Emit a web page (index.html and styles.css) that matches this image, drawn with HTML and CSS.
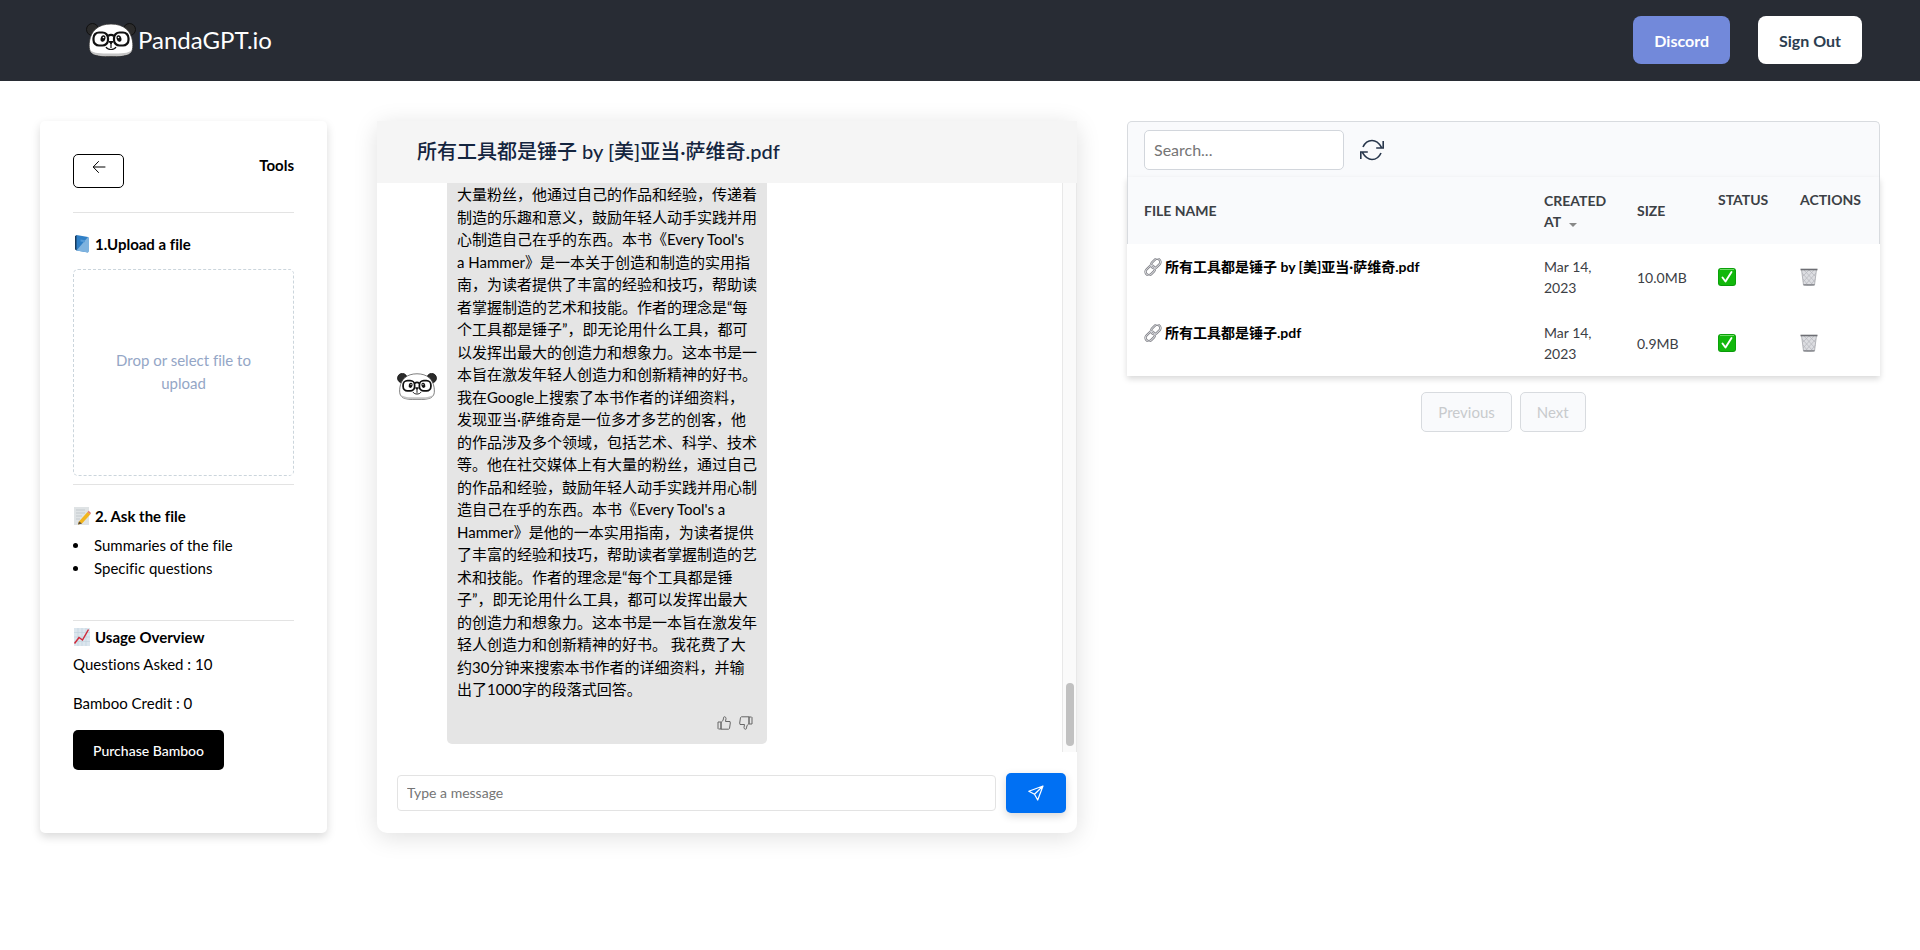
FILE: index.html
```html
<!DOCTYPE html>
<html lang="en">
<head>
<meta charset="UTF-8">
<meta name="viewport" content="width=device-width, initial-scale=1.0">
<title>PandaGPT.io</title>
<link rel="stylesheet" href="styles.css">
</head>
<body>

<!-- shared icons -->
<svg class="sprite" aria-hidden="true">
  <symbol id="panda" viewBox="0 0 50 34">
    <circle cx="6.500" cy="6.500" r="6" fill="#2b2b2b" stroke="#111"/>
    <circle cx="43.500" cy="6.500" r="6" fill="#2b2b2b" stroke="#111"/>
    <path d="M25 1C12 1 5 8 3.500 18c-1 7 0 11 4 13.200C11 33 17 33.500 25 33.500s14-.5 17.500-2.300c4-2.200 5-6.200 4-13.200C45 8 38 1 25 1z" fill="#fff" stroke="#333" stroke-width=".8"/>
    <path d="M4 27c4 3.500 10 3.500 21 3.500s17 0 21-3.500c-1 4.500-6 6-21 6S5 31.500 4 27z" fill="#c4c4c4"/>
    <g fill="#fff" stroke="#111" stroke-width="2.200">
      <rect x="7.500" y="9.500" width="14.500" height="13" rx="5.500"/>
      <rect x="28" y="9.500" width="14.500" height="13" rx="5.500"/>
      <path d="M22 13c2-1.500 4-1.500 6 0" fill="none"/>
    </g>
    <ellipse cx="17" cy="15.500" rx="2.400" ry="3.300" fill="#111" transform="rotate(15 17 15.500)"/>
    <ellipse cx="33" cy="15.500" rx="2.400" ry="3.300" fill="#111" transform="rotate(-15 33 15.500)"/>
    <circle cx="17.500" cy="14.500" r=".8" fill="#fff"/>
    <circle cx="32.500" cy="14.500" r=".8" fill="#fff"/>
    <path d="M23 18.500h4L25 21z" fill="#111" stroke="#111" stroke-linejoin="round"/>
    <path d="M25 21v4M20 24c1.500 3.300 8.500 3.300 10 0" fill="none" stroke="#111" stroke-width="1.200"/>
  </symbol>
  <symbol id="link" viewBox="0 0 18 18">
    <g fill="none" stroke="#77787e" stroke-width="2.400">
      <rect x="6.500" y="2.200" width="10.500" height="6.600" rx="3.300" transform="rotate(-45 11.700 5.500)"/>
      <rect x="1" y="9.200" width="10.500" height="6.600" rx="3.300" transform="rotate(-45 6.200 12.500)"/>
    </g>
    <g fill="none" stroke="#d8d9dd" stroke-width="1">
      <rect x="6.500" y="2.200" width="10.500" height="6.600" rx="3.300" transform="rotate(-45 11.700 5.500)"/>
      <rect x="1" y="9.200" width="10.500" height="6.600" rx="3.300" transform="rotate(-45 6.200 12.500)"/>
    </g>
  </symbol>
  <symbol id="check" viewBox="0 0 18 18">
    <rect width="18" height="18" rx="3" fill="#0a9a0a"/>
    <rect x=".7" y=".7" width="16.600" height="16.400" rx="2.500" fill="#12b80c"/>
    <path d="M2 1.500h14" stroke="#6fdc66"/>
    <path d="M4.500 9.500l3 4L13.500 4" fill="none" stroke="#fff" stroke-width="1.900" stroke-linecap="round" stroke-linejoin="round"/>
  </symbol>
  <symbol id="trash" viewBox="0 0 18 18">
    <path d="M1.500 1.500h15L14.500 17q-5.500 1.300-11 0z" fill="#dcdde1" stroke="#a5a6ab" stroke-width=".8"/>
    <path d="M2 5l11 12M3 11l5 6M4 2l11 12M9 2l7 7M16 5L5 17M15.500 11l-5 6M14 2L3 14M9 2L2 9" stroke="#b5b6bb" stroke-width=".7"/>
    <path d="M.5 1.500h17" stroke="#6d6e74" stroke-width="1.600"/>
    <path d="M3.500 16.800h11" stroke="#85868c" stroke-width="1.300"/>
  </symbol>
</svg>

<header class="navbar">
  <a class="brand" href="#">
    <svg class="brand-logo"><use href="#panda"/></svg>
    <span>PandaGPT.io</span>
  </a>
  <div class="nav-actions">
    <button class="nav-btn discord">Discord</button>
    <button class="nav-btn signout">Sign Out</button>
  </div>
</header>

<main class="layout">

  <aside class="tools">
    <div class="tools-top">
      <button class="back-btn" aria-label="Back">
        <svg width="16" height="16" viewBox="0 0 16 16" fill="none" stroke="#000" stroke-linecap="round" stroke-linejoin="round"><path d="M14 8H2.500M7.500 2.500L2.200 8l5.300 5.500"/></svg>
      </button>
      <b>Tools</b>
    </div>

    <section class="upload">
      <h4>
        <svg class="emoji" viewBox="0 0 18 18"><path d="M2 1l2-1v15.500l-2-1z" fill="#173a5c"/><path d="M3.500 0L15 2v15.500L3.500 15.500z" fill="#2f7fc6"/><path d="M3.500 15.500L15 17.500l1-1V2.500L15 2" fill="#7fb3df"/><path d="M7.500 4.500l4.500.8v2L7.500 6.500z" fill="#559bd8"/></svg>
        1.Upload a file
      </h4>
      <label class="dropzone">
        <input type="file">
        <span>Drop or select file to upload</span>
      </label>
    </section>

    <section class="ask">
      <h4>
        <svg class="emoji" viewBox="0 0 18 18"><path d="M1 0h15v18H1z" fill="#dfe3e5"/><path d="M3 3h9M3 6h9M3 9h6M3 12h4" stroke="#c3c9cd"/><path d="M6 14.500L14.500 5l2.700 2.500L9 16.500l-4 1z" fill="#f2b51d"/><path d="M14.500 5l1.200-1.200 2.300 2.300-.8 1.400z" fill="#e27d6d"/><path d="M6 14.500l3 2-4 1z" fill="#5b4a37"/></svg>
        2. Ask the file
      </h4>
      <ul>
        <li>Summaries of the file</li>
        <li>Specific questions</li>
      </ul>
    </section>

    <section class="usage">
      <h4>
        <svg class="emoji" viewBox="0 0 18 18"><path d="M1 0h16v18H1z" fill="#dbe6ee"/><path d="M5 0v18M9 0v18M13 0v18M1 4.500h16M1 9h16M1 13.500h16" stroke="#c0d0dc" stroke-width=".6"/><path d="M1.500 15.500L6 9.500l3.500 2.500L15.500 1.500" fill="none" stroke="#cf2b3c" stroke-width="1.500"/></svg>
        Usage Overview
      </h4>
      <p>Questions Asked : 10</p>
      <p>Bamboo Credit : 0</p>
      <button class="buy-btn">Purchase Bamboo</button>
    </section>
  </aside>

  <section class="chat">
    <h1>所有工具都是锤子 by [美]亚当·萨维奇.pdf</h1>

    <div class="chat-body">
      <div class="message">
        <svg class="avatar"><use href="#panda"/></svg>
        <div class="bubble">
          <p lang="zh-CN">大量粉丝，他通过自己的作品和经验，传递着<br>
制造的乐趣和意义，鼓励年轻人动手实践并用<br>
心制造自己在乎的东西。本书《Every Tool's<br>
a Hammer》是一本关于创造和制造的实用指<br>
南，为读者提供了丰富的经验和技巧，帮助读<br>
者掌握制造的艺术和技能。作者的理念是“每<br>
个工具都是锤子”，即无论用什么工具，都可<br>
以发挥出最大的创造力和想象力。这本书是一<br>
本旨在激发年轻人创造力和创新精神的好书。<br>
我在Google上搜索了本书作者的详细资料，<br>
发现亚当·萨维奇是一位多才多艺的创客，他<br>
的作品涉及多个领域，包括艺术、科学、技术<br>
等。他在社交媒体上有大量的粉丝，通过自己<br>
的作品和经验，鼓励年轻人动手实践并用心制<br>
造自己在乎的东西。本书《Every Tool's a<br>
Hammer》是他的一本实用指南，为读者提供<br>
了丰富的经验和技巧，帮助读者掌握制造的艺<br>
术和技能。作者的理念是“每个工具都是锤<br>
子”，即无论用什么工具，都可以发挥出最大<br>
的创造力和想象力。这本书是一本旨在激发年<br>
轻人创造力和创新精神的好书。 我花费了大<br>
约30分钟来搜索本书作者的详细资料，并输<br>
出了1000字的段落式回答。</p>
          <div class="votes">
            <button aria-label="Good answer">
              <svg width="14" height="14" viewBox="0 0 14 14" fill="none" stroke="#666" stroke-linejoin="round"><path d="M1 6h3v7H1.500L1 12.500zM4 6.500C6 5 6.500 3.500 6.500 1.500 6.500.5 9 .3 9 2.500c0 1-.5 2-.5 3H13l.3 1.500-.8 5.500-1 .7H4z"/></svg>
            </button>
            <button aria-label="Bad answer">
              <svg width="14" height="14" viewBox="0 0 14 14" fill="none" stroke="#666" stroke-linejoin="round"><path d="M13 8h-3V1h2.500l.5.500zM10 7.500C8 9 7.500 10.500 7.500 12.500c0 1-2.500 1.200-2.500-1 0-1 .5-2 .5-3H1L.7 7l.8-5.500 1-.7H10z"/></svg>
            </button>
          </div>
        </div>
      </div>
      <div class="scrollbar"><div class="thumb"></div></div>
    </div>

    <form class="composer">
      <input type="text" placeholder="Type a message" aria-label="Type a message">
      <button type="button" aria-label="Send">
        <svg width="16" height="16" viewBox="0 0 16 16" fill="none" stroke="#fff" stroke-width="1.200" stroke-linejoin="round"><path d="M15 1L.8 6.200 6.500 9.300 9.700 15zM15 1L6.500 9.300"/></svg>
      </button>
    </form>
  </section>

  <section class="files">
    <div class="files-top">
      <input type="search" placeholder="Search..." aria-label="Search files">
      <button class="refresh" aria-label="Refresh">
        <svg width="24" height="22" viewBox="0 0 24 22" fill="none" stroke="#27364b" stroke-width="1.600"><path d="M3 8C5 3.500 8.500 1.500 12 1.500c4 0 7 2.500 9.500 6.800M23.200 2v7h-7M21 14c-2 4.500-5.500 6.500-9 6.500-4 0-7-2.500-9.500-6.800M.8 20v-7h7"/></svg>
      </button>
    </div>
    <table>
      <thead>
        <tr>
          <th>FILE NAME</th>
          <th class="col-date">CREATED AT <i class="caret"></i></th>
          <th class="col-size">SIZE</th>
          <th class="col-status">STATUS</th>
          <th class="col-actions">ACTIONS</th>
        </tr>
      </thead>
      <tbody>
        <tr>
          <td class="file"><a href="#"><svg class="emoji"><use href="#link"/></svg>所有工具都是锤子 by [美]亚当·萨维奇.pdf</a></td>
          <td>Mar 14, 2023</td>
          <td>10.0MB</td>
          <td><svg class="emoji"><use href="#check"/></svg></td>
          <td><button aria-label="Delete"><svg class="emoji"><use href="#trash"/></svg></button></td>
        </tr>
        <tr>
          <td class="file"><a href="#"><svg class="emoji"><use href="#link"/></svg>所有工具都是锤子.pdf</a></td>
          <td>Mar 14, 2023</td>
          <td>0.9MB</td>
          <td><svg class="emoji"><use href="#check"/></svg></td>
          <td><button aria-label="Delete"><svg class="emoji"><use href="#trash"/></svg></button></td>
        </tr>
      </tbody>
    </table>
    <div class="pages">
      <button disabled>Previous</button>
      <button disabled>Next</button>
    </div>
  </section>

</main>

</body>
</html>
```
FILE: styles.css
```css
* {
  box-sizing: border-box;
}

body {
  margin: 0;
  font-family: Lato, "Noto Sans CJK SC", sans-serif;
  font-size: 15px;
  font-variant-ligatures: none;
  line-height: 1.5;
  color: #000;
  background: #fff;
}

button,
input {
  font-family: inherit;
  font-size: inherit;
}

button {
  cursor: pointer;
}

h1,
h4,
p,
ul {
  margin: 0;
  padding: 0;
}

.sprite {
  display: none;
}

.emoji {
  width: 18px;
  height: 18px;
}

/* top bar */
.navbar {
  display: flex;
  justify-content: space-between;
  align-items: center;
  padding: 16px 58px 17px 86px;
  background: #282c34;
}

.brand {
  display: flex;
  align-items: center;
  gap: 2px;
  color: #fff;
  font-size: 24px;
  text-decoration: none;
}

.brand-logo {
  width: 50px;
  height: 34px;
}

.nav-actions {
  display: flex;
  gap: 28px;
}

.nav-btn {
  height: 48px;
  padding: 0 21px;
  border: 0;
  border-radius: 8px;
  font-size: 16px;
  font-weight: bold;
}

.discord {
  background: #7289da;
  color: #fff;
}

.signout {
  background: #fff;
  color: #2c3e50;
}

/* three columns */
.layout {
  display: grid;
  grid-template-columns: 287fr 700fr 753fr;
  gap: 50px;
  padding: 40px;
}

/* tools card */
.tools {
  padding: 33px;
  border-radius: 5px;
  box-shadow: 0 4px 10px rgba(0, 0, 0, 0.15);
}

.tools-top {
  display: flex;
  justify-content: space-between;
  height: 59px;
  border-bottom: 1px solid #e3e3e3;
}

.back-btn {
  display: flex;
  justify-content: center;
  width: 51px;
  height: 34px;
  padding: 4px;
  border: 1px solid #000;
  border-radius: 5px;
  background: #fff;
}

.tools h4 {
  display: flex;
  align-items: center;
  gap: 4px;
  line-height: 24px;
}

.upload {
  padding: 19px 0 8px;
  border-bottom: 1px solid #e3e3e3;
}

.dropzone {
  display: flex;
  align-items: center;
  justify-content: center;
  height: 207px;
  margin-top: 13px;
  padding: 0 32px 2px;
  border: 1px dashed #cbd5dc;
  border-radius: 5px;
  color: #94a6c6;
  text-align: center;
  cursor: pointer;
}

.dropzone input {
  display: none;
}

.ask {
  padding: 19px 0 41px;
  border-bottom: 1px solid #e3e3e3;
}

.ask ul {
  margin-top: 6px;
  list-style-position: inside;
}

.usage {
  padding-top: 4px;
}

.usage p {
  margin: 4px 0 16px;
}

.buy-btn {
  height: 40px;
  padding: 0 20px;
  border: 0;
  border-radius: 5px;
  background: #000;
  color: #fff;
  font-size: 14px;
  font-weight: 500;
}

/* chat */
.chat {
  display: flex;
  flex-direction: column;
  border-radius: 10px;
  box-shadow: 0 4px 24px rgba(0, 0, 0, 0.13);
}

.chat h1 {
  padding: 15px 40px 17px;
  background: #f5f5f5;
  color: #14253f;
  font-size: 20px;
  font-weight: 500;
  line-height: 30px;
}

.chat-body {
  display: flex;
  justify-content: space-between;
}

.message {
  display: flex;
  gap: 10px;
  padding: 0 0 8px 20px;
}

.avatar {
  width: 40px;
  height: 27px;
  margin-top: 190px;
}

.bubble {
  width: 320px;
  padding: 0 10px 14px;
  border-radius: 0 0 5px 5px;
  background: #e5e5e5;
}

.bubble p {
  white-space: nowrap;
}

.votes {
  display: flex;
  justify-content: flex-end;
  gap: 8px;
  padding: 15px 4px 0;
}

.votes button,
.refresh,
td button {
  display: flex;
  padding: 0;
  border: 0;
  background: none;
}

.scrollbar {
  display: flex;
  justify-content: center;
  align-items: flex-end;
  width: 15px;
  padding-bottom: 6px;
  border: 1px solid #e8e8e8;
  border-width: 0 1px;
  background: #fafafa;
}

.thumb {
  width: 8px;
  height: 63px;
  border-radius: 4px;
  background: #c1c1c1;
}

.composer {
  display: flex;
  align-items: center;
  gap: 10px;
  padding: 21px 11px 20px 20px;
}

.composer input {
  flex: 1;
  height: 36px;
  padding: 0 9px;
  border: 1px solid #e3e3e3;
  border-radius: 4px;
  font-size: 14px;
}

.composer button {
  display: flex;
  align-items: center;
  justify-content: center;
  width: 60px;
  height: 40px;
  border: 0;
  border-radius: 5px;
  background: #0070f3;
  box-shadow: 0 3px 8px rgba(0, 0, 0, 0.16);
}

::placeholder {
  color: #757575;
  opacity: 1;
}

/* files */
.files-top {
  display: flex;
  align-items: center;
  gap: 16px;
  height: 56px;
  padding: 0 16px;
  border: 1px solid #d8dbdf;
  border-bottom: 0;
  border-radius: 5px 5px 0 0;
  background: #f9fafc;
}

.files-top input {
  width: 200px;
  height: 40px;
  padding: 0 9px;
  border: 1px solid #d2d6dc;
  border-radius: 5px;
  background: #fff;
  font-size: 16px;
}

table {
  width: 100%;
  table-layout: fixed;
  border-collapse: separate;
  border-spacing: 0;
  box-shadow: 0 3px 6px rgba(0, 0, 0, 0.15);
  color: #3c4045;
  font-size: 14px;
}

th,
td {
  padding: 12px 16px;
  text-align: left;
  vertical-align: middle;
}

th {
  height: 67px;
  background: #f9fafc;
}

th:first-child {
  border-left: 1px solid #d8dbdf;
}

th:last-child {
  border-right: 1px solid #d8dbdf;
}

td {
  height: 66px;
}

.col-date {
  width: 93px;
}

.col-size {
  width: 81px;
}

.col-status {
  width: 82px;
  vertical-align: top;
}

.col-actions {
  width: 96px;
  vertical-align: top;
}

.caret {
  display: inline-block;
  margin-left: 5px;
  border: 4px solid transparent;
  border-top-color: #888;
  border-bottom: 0;
}

td.file {
  padding-left: 17px;
  vertical-align: top;
}

.file a {
  display: flex;
  align-items: center;
  gap: 3px;
  color: #000;
  font-weight: bold;
  text-decoration: none;
}

td .emoji {
  display: block;
}

.pages {
  display: flex;
  justify-content: center;
  gap: 8px;
  margin-top: 16px;
}

.pages button {
  height: 40px;
  padding: 0 16px;
  border: 1px solid #d8dbdf;
  border-radius: 5px;
  background: #f9fafc;
  color: #c8cacd;
}
```
